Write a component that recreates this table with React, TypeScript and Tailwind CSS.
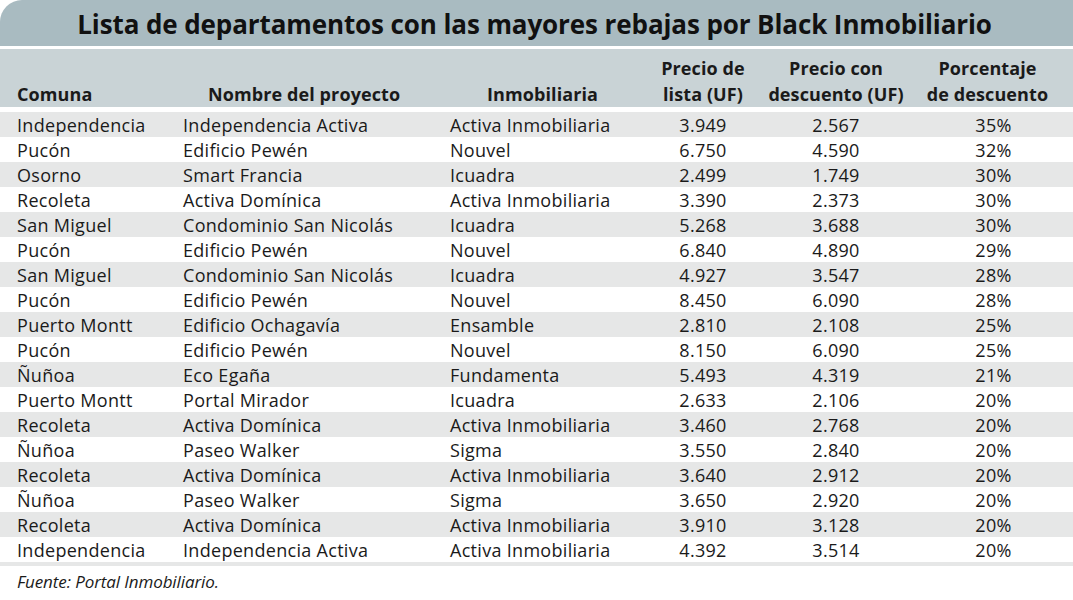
const rows: [string, string, string, string, string, string][] = [
  ["Independencia", "Independencia Activa", "Activa Inmobiliaria", "3.949", "2.567", "35%"],
  ["Pucón", "Edificio Pewén", "Nouvel", "6.750", "4.590", "32%"],
  ["Osorno", "Smart Francia", "Icuadra", "2.499", "1.749", "30%"],
  ["Recoleta", "Activa Domínica", "Activa Inmobiliaria", "3.390", "2.373", "30%"],
  ["San Miguel", "Condominio San Nicolás", "Icuadra", "5.268", "3.688", "30%"],
  ["Pucón", "Edificio Pewén", "Nouvel", "6.840", "4.890", "29%"],
  ["San Miguel", "Condominio San Nicolás", "Icuadra", "4.927", "3.547", "28%"],
  ["Pucón", "Edificio Pewén", "Nouvel", "8.450", "6.090", "28%"],
  ["Puerto Montt", "Edificio Ochagavía", "Ensamble", "2.810", "2.108", "25%"],
  ["Pucón", "Edificio Pewén", "Nouvel", "8.150", "6.090", "25%"],
  ["Ñuñoa", "Eco Egaña", "Fundamenta", "5.493", "4.319", "21%"],
  ["Puerto Montt", "Portal Mirador", "Icuadra", "2.633", "2.106", "20%"],
  ["Recoleta", "Activa Domínica", "Activa Inmobiliaria", "3.460", "2.768", "20%"],
  ["Ñuñoa", "Paseo Walker", "Sigma", "3.550", "2.840", "20%"],
  ["Recoleta", "Activa Domínica", "Activa Inmobiliaria", "3.640", "2.912", "20%"],
  ["Ñuñoa", "Paseo Walker", "Sigma", "3.650", "2.920", "20%"],
  ["Recoleta", "Activa Domínica", "Activa Inmobiliaria", "3.910", "3.128", "20%"],
  ["Independencia", "Independencia Activa", "Activa Inmobiliaria", "4.392", "3.514", "20%"],
];

const cols = "grid grid-cols-[183px_267px_190px_126px_140px_1fr]";

export default function App() {
  return (
    <main
      className="w-[1073px] h-[600px] bg-white text-[#1a1a1a] overflow-hidden"
      style={{ fontFamily: '"Open Sans", "Noto Sans", sans-serif' }}
    >
      <div className="h-[46px] bg-[#a9bbc1] rounded-tl-[22px] flex items-center justify-center pt-[2px]">
        <h1 className="text-[26px] font-bold tracking-[-0.1px] text-[#111] pr-[4px]">
          Lista de departamentos con las mayores rebajas por Black Inmobiliario
        </h1>
      </div>
      <div className="h-[3px]" />
      <div className={`${cols} h-[58px] bg-[#c9d3d6] items-end text-[18px] font-bold leading-[26px] tracking-[0.1px]`}>
        <div className="pl-[17px]">Comuna</div>
        <div className="pl-[25px]">Nombre del proyecto</div>
        <div className="pl-[37px]">Inmobiliaria</div>
        <div className="text-center">
          Precio de
          <br />
          lista (UF)
        </div>
        <div className="text-center">
          Precio con
          <br />
          descuento (UF)
        </div>
        <div className="text-center pr-[4px]">
          Porcentaje
          <br />
          de descuento
        </div>
      </div>
      <div className="h-[5px]" />
      <div className="text-[18px] tracking-[0.3px]">
        {rows.map((r, i) => (
          <div
            key={i}
            className={`${cols} h-[25px] items-center ${i % 2 === 0 ? "bg-[#e6e7e7]" : "bg-white"}`}
          >
            <div className="pl-[17px] whitespace-nowrap">{r[0]}</div>
            <div className="whitespace-nowrap">{r[1]}</div>
            <div className="whitespace-nowrap">{r[2]}</div>
            <div className="text-center">{r[3]}</div>
            <div className="text-center">{r[4]}</div>
            <div className="text-center pl-2">{r[5]}</div>
          </div>
        ))}
      </div>
      <div className="h-[4px] bg-[#e6e7e7]" />
      <p className="pl-[17px] pt-[3px] text-[17px] italic tracking-[-0.1px]">Fuente: Portal Inmobiliario.</p>
    </main>
  );
}
